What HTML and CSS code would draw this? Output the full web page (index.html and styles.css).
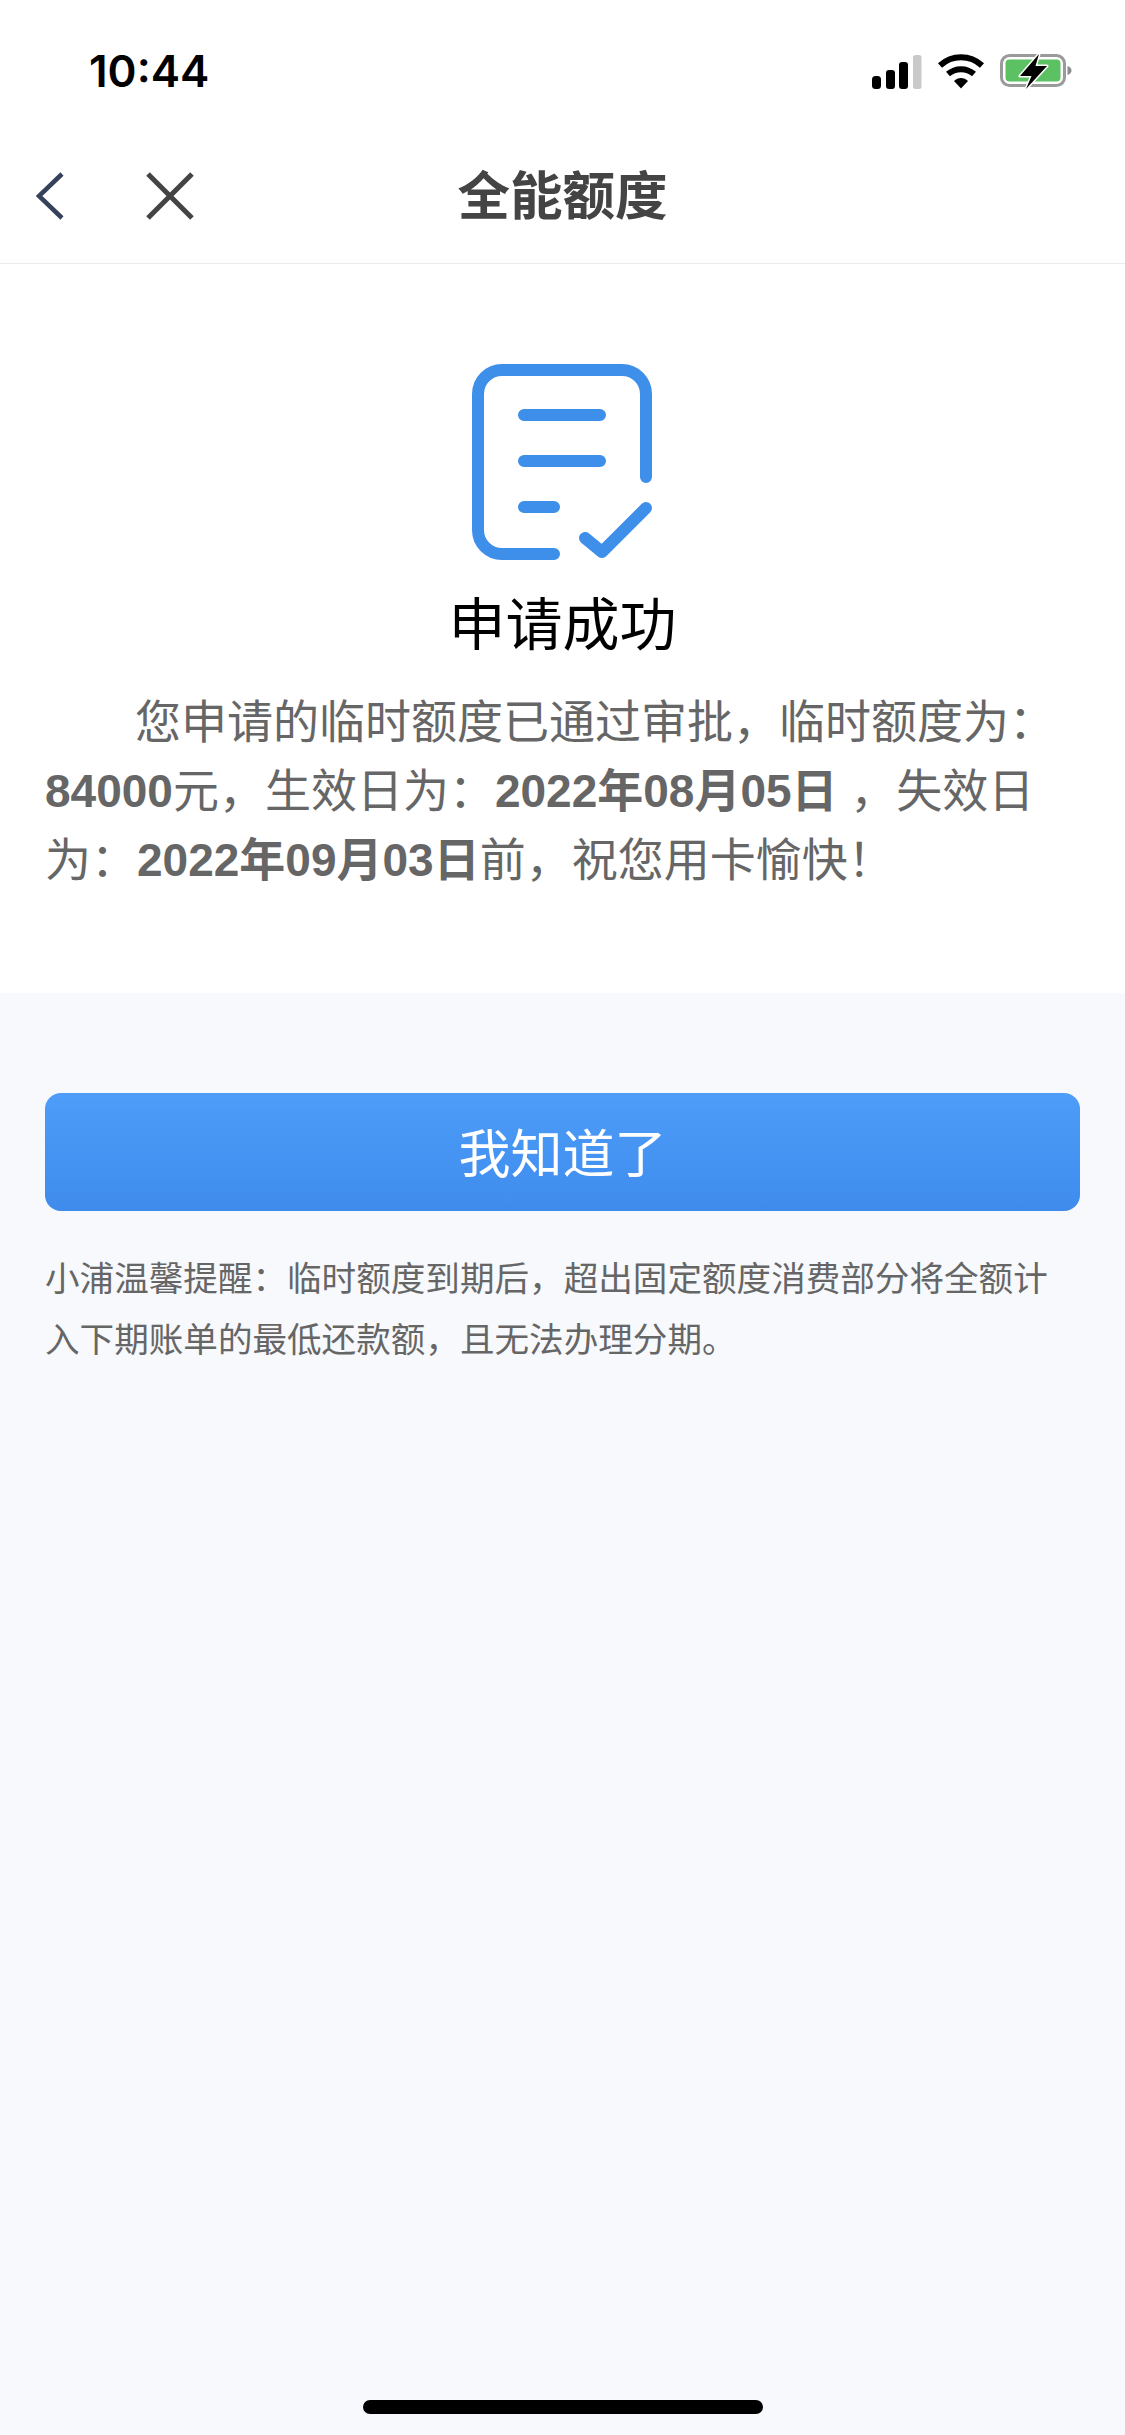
FILE: index.html
```html
<!DOCTYPE html>
<html lang="zh-CN">
<head>
<meta charset="utf-8">
<title>全能额度</title>
<link rel="stylesheet" href="styles.css">
</head>
<body>
<div class="page">
  <header class="status">
    <span class="time">10:44</span>
    <div class="status-icons">
      <svg class="signal" width="50" height="34" viewBox="0 0 50 34"><rect x="0" y="21" width="9" height="13" rx="3.5" fill="#000"/><rect x="14" y="15" width="9" height="19" rx="3" fill="#000"/><rect x="27" y="7" width="9" height="27" rx="3" fill="#000"/><rect x="41" y="0" width="8.500" height="34" rx="2.500" fill="#c9c9c9"/></svg>
      <svg class="wifi" width="48" height="36" viewBox="0 0 48 36"><path d="M3 12.500C15 1.500 33 1.500 45 12.500" fill="none" stroke="#000" stroke-width="6"/><path d="M11 21C18.500 14.500 29.500 14.500 37 21" fill="none" stroke="#000" stroke-width="6"/><path d="M17 28C21 24 27 24 31 28L24 35.500Z" fill="#000"/></svg>
      <svg class="battery" width="72" height="36" viewBox="0 0 72 36"><rect x="1.500" y="2.500" width="63" height="30" rx="8" fill="none" stroke="#9a9a9a" stroke-width="3"/><rect x="5.500" y="6.500" width="55" height="22" rx="4" fill="#5cc163"/><path d="M67.500 13C70 13.500 71.500 15.500 71.500 17.500C71.500 19.500 70 21.500 67.500 22Z" fill="#8c8c8c"/><path d="M39 1L20 23H31.500L26 36L47 13H35.500Z" fill="#000" stroke="#fff" stroke-width="3" stroke-linejoin="round" paint-order="stroke"/></svg>
    </div>
  </header>
  <nav class="nav">
    <div class="nav-icons">
      <svg class="back" width="28" height="48" viewBox="0 0 28 48"><path d="M26 2L3 24L26 46" fill="none" stroke="#36425a" stroke-width="4.500"/></svg>
      <svg class="close" width="48" height="48" viewBox="0 0 48 48"><path d="M2 2L46 46M46 2L2 46" fill="none" stroke="#444" stroke-width="5"/></svg>
    </div>
    <h1 class="nav-title">全能额度</h1>
  </nav>
  <main>
    <section class="result">
      <svg class="doc" width="180" height="196" viewBox="0 0 180 196"><g fill="none" stroke="#3d8fe9" stroke-width="12" stroke-linecap="round" stroke-linejoin="round"><path d="M82 190H30A24 24 0 0 1 6 166V30A24 24 0 0 1 30 6H150A24 24 0 0 1 174 30V113"/><path d="M52 51H128M52 97H128M52 143H82"/><path d="M113 174L130 188L174 144"/></g></svg>
      <h2 class="result-title">申请成功</h2>
      <p class="result-text">您申请的临时额度已通过审批，临时额度为：<b>84000</b>元，生效日为：<b>2022年08月05日</b> ，失效日为：<b>2022年09月03日</b>前，祝您用卡愉快！</p>
    </section>
    <section class="actions">
      <button class="primary" type="button">我知道了</button>
      <p class="note">小浦温馨提醒：临时额度到期后，超出固定额度消费部分将全额计入下期账单的最低还款额，且无法办理分期。</p>
    </section>
  </main>
  <div class="home-bar"></div>
</div>
</body>
</html>
```
FILE: styles.css
```css
* { box-sizing: border-box; }
html, body { margin: 0; padding: 0; }
body { font-family: "Liberation Sans", "Noto Sans CJK SC", sans-serif; background: #f7f9fd; }
.page { position: relative; width: 1125px; height: 2435px; display: flex; flex-direction: column; background: #f7f9fd; overflow: hidden; }
.status { height: 130px; background: #fff; display: flex; align-items: flex-start; justify-content: space-between; padding: 53px 53px 0 89px; flex: none; }
.time { font-family: Inter, "Liberation Sans", sans-serif; font-weight: 600; font-size: 44px; line-height: 36px; color: #000; }
.status-icons { display: flex; align-items: flex-start; }
.signal { margin: 2px 15px 0 0; }
.wifi { margin: 0 15px 0 0; }
.battery { margin-top: 0; }
.nav { height: 134px; background: #fff; border-bottom: 1px solid #ebebeb; display: flex; align-items: center; justify-content: center; position: relative; flex: none; }
.nav-icons { position: absolute; left: 36px; top: 42px; display: flex; gap: 82px; }
.nav-title { margin: 0; font-size: 52.500px; line-height: 60px; font-weight: 700; color: #444; }
.result { background: #fff; height: 729px; padding: 100px 45px 0; display: flex; flex-direction: column; align-items: center; }
.doc { margin-left: -2px; flex: none; }
.result-title { margin: 29px 0 0; font-size: 57px; line-height: 72px; font-weight: 400; color: #000; }
.result-text { margin: 27px 0 0; align-self: stretch; font-size: 46px; line-height: 69px; color: #666; text-indent: 90px; }
.result-text b { font-weight: 700; }
.actions { padding: 100px 45px 0; }
.primary { display: block; width: 100%; height: 118px; padding: 0 0 3px; border: 0; border-radius: 16px; background: linear-gradient(180deg, #4d9df9, #3e8bec); color: #fff; font-family: inherit; font-size: 52px; }
.note { margin: 38px 0 0; padding-right: 25px; font-size: 34.600px; line-height: 61px; color: #666; }
.home-bar { position: absolute; left: 363px; top: 2400px; width: 400px; height: 14px; border-radius: 7px; background: #000; }
```
